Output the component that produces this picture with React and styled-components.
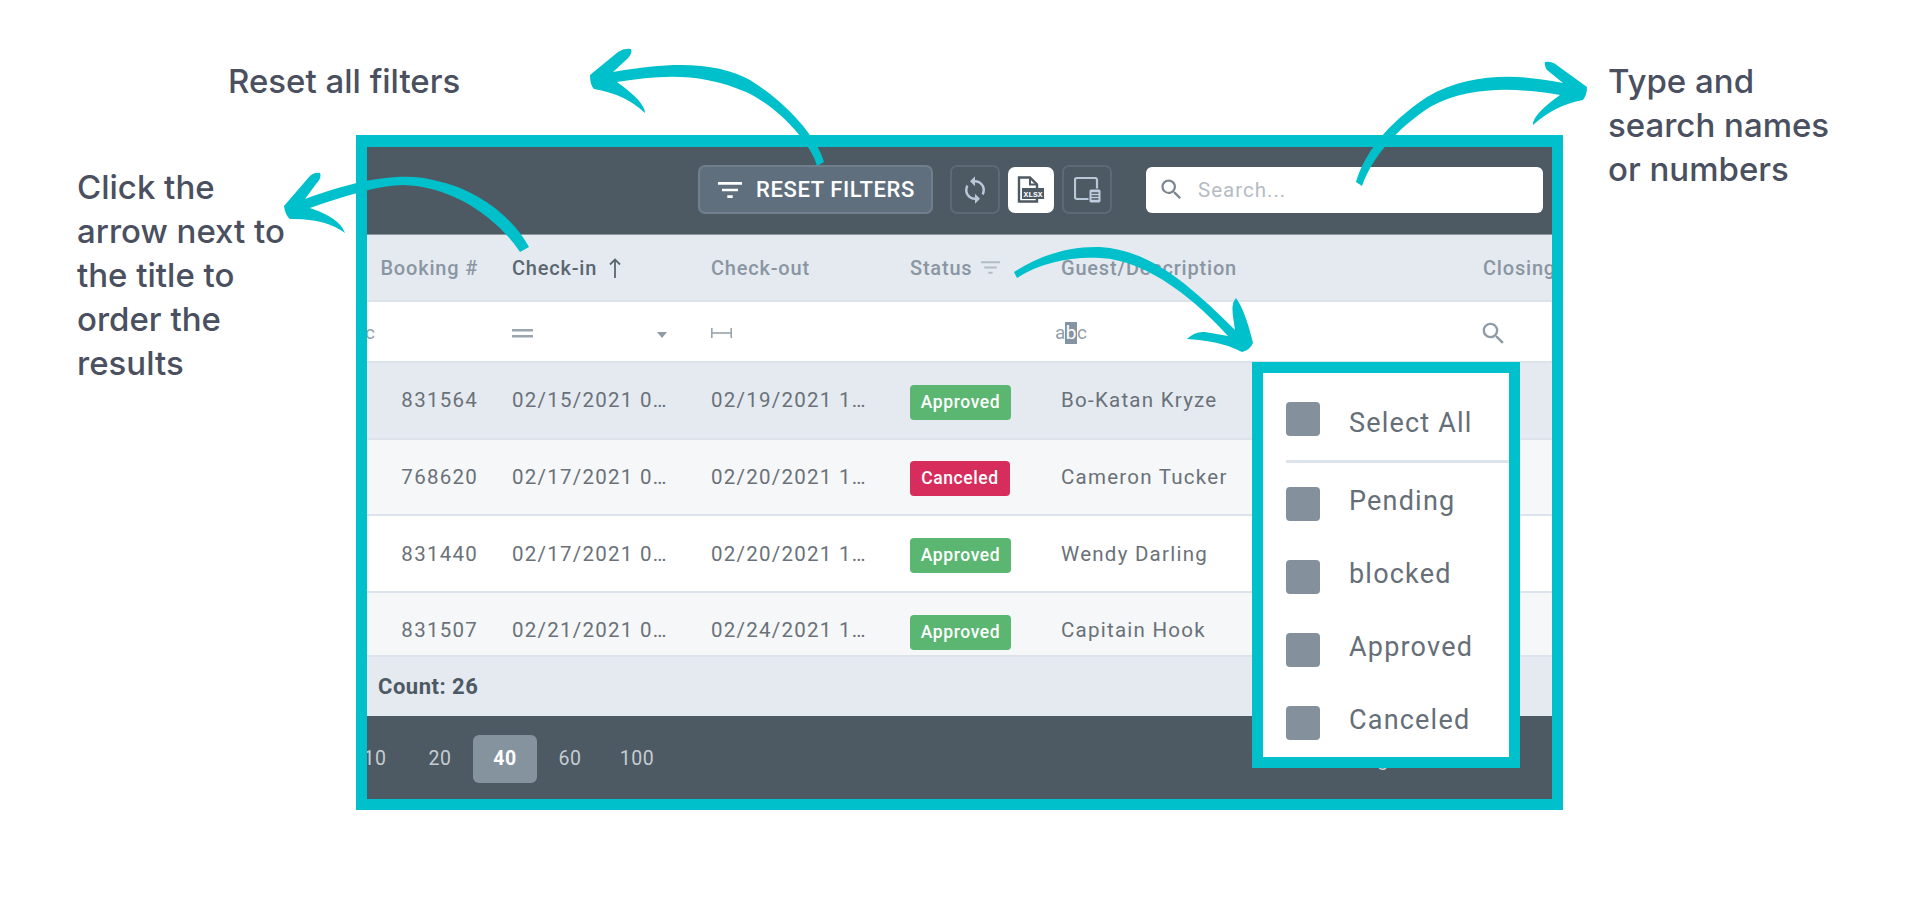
import React from "react";
import styled, { createGlobalStyle } from "styled-components";
import { MdFilterList, MdSearch, MdSync } from "react-icons/md";

const CYAN = "#00c1cb";
const COLUMNS = "162px 199px 199px 151px 422px 300px";

const bookings = [
  { id: "831564", checkIn: "02/15/2021 0…", checkOut: "02/19/2021 1…", status: "Approved", guest: "Bo-Katan Kryze", bg: "#e5eaf1" },
  { id: "768620", checkIn: "02/17/2021 0…", checkOut: "02/20/2021 1…", status: "Canceled", guest: "Cameron Tucker", bg: "#f5f7f9" },
  { id: "831440", checkIn: "02/17/2021 0…", checkOut: "02/20/2021 1…", status: "Approved", guest: "Wendy Darling", bg: "#ffffff" },
  { id: "831507", checkIn: "02/21/2021 0…", checkOut: "02/24/2021 1…", status: "Approved", guest: "Capitain Hook", bg: "#f5f7f9" },
];

const statusOptions = ["Pending", "blocked", "Approved", "Canceled"];
const pageSizes = [10, 20, 40, 60, 100];

const GlobalStyle = createGlobalStyle`
  html, body {
    margin: 0;
    padding: 0;
    background: #fff;
  }
  body {
    font-family: Roboto, "Liberation Sans", sans-serif;
  }
`;

const Page = styled.div`
  position: relative;
  width: 1920px;
  height: 900px;
  padding: 135px 0 0 356px;
  box-sizing: border-box;
  overflow: hidden;
  background: #fff;
`;

const Callout = styled.div`
  position: absolute;
  left: ${({ $x }) => $x}px;
  top: ${({ $y }) => $y}px;
  font-family: Inter, "Open Sans", sans-serif;
  font-size: 33px;
  font-weight: 500;
  line-height: 44px;
  color: #4a5060;
  white-space: nowrap;
`;

const Frame = styled.div`
  position: relative;
  width: 1185px;
  height: 652px;
  border: solid ${CYAN};
  border-width: 12px 11px 11px;
  background: #fff;
`;

const Clip = styled.div`
  height: 100%;
  overflow: hidden;
`;

const Toolbar = styled.div`
  display: flex;
  align-items: center;
  justify-content: flex-end;
  height: 88px;
  padding: 0 9px 2px 0;
  box-sizing: border-box;
  background: #4d5963;
  border-bottom: 1px solid #8b96a1;
`;

const ResetButton = styled.button`
  display: flex;
  align-items: center;
  justify-content: center;
  gap: 10px;
  width: 235px;
  height: 49px;
  margin-right: 17px;
  padding: 0 2px 0 0;
  border: 2px solid #6f7f8e;
  border-radius: 7px;
  background: #5f6f7e;
  color: #fff;
  font: 500 22px Roboto, sans-serif;
  letter-spacing: 0.6px;
`;

const IconButton = styled.button`
  display: flex;
  align-items: center;
  justify-content: center;
  box-sizing: border-box;
  width: ${({ $active }) => ($active ? 46 : 50)}px;
  height: ${({ $active }) => ($active ? 46 : 49)}px;
  margin-right: ${({ $gap }) => $gap}px;
  padding: 0;
  border: ${({ $active }) => ($active ? "0" : "2px solid #5d6a76")};
  border-radius: 7px;
  background: ${({ $active }) => ($active ? "#fff" : "transparent")};
  color: #b9c8d8;
`;

const SearchBox = styled.div`
  display: flex;
  align-items: center;
  gap: 13px;
  width: 397px;
  height: 46px;
  padding-left: 12px;
  box-sizing: border-box;
  border-radius: 6px;
  background: #fff;
  color: #7a8691;
`;

const Placeholder = styled.span`
  font-size: 20.5px;
  letter-spacing: 1px;
  color: #b5bcc3;
`;

const Table = styled.div`
  margin-left: -34px;
  width: 1333px;
`;

const GridRow = styled.div`
  display: grid;
  grid-template-columns: ${COLUMNS};
  align-items: center;
  box-sizing: border-box;
`;

const HeaderRow = styled(GridRow)`
  height: 67px;
  background: #e5eaf1;
  border-bottom: 2px solid #dde3ea;
`;

const HeaderCell = styled.div`
  display: flex;
  align-items: center;
  gap: ${({ $gap }) => $gap || 0}px;
  padding: 0 17px;
  justify-content: ${({ $right }) => ($right ? "flex-end" : "flex-start")};
  font-size: 20px;
  font-weight: 500;
  letter-spacing: 0.8px;
  white-space: nowrap;
  color: ${({ $active }) => ($active ? "#5b6670" : "#8a96a2")};
`;

const FilterRow = styled(GridRow)`
  height: 61px;
  background: #fff;
  border-bottom: 2px solid #dde3ea;
`;

const FilterCell = styled.div`
  display: flex;
  align-items: center;
  justify-content: space-between;
  padding: 3px 27px 0 ${({ $pad }) => $pad}px;
  color: #8f9ba7;
`;

const AbcGlyph = styled.span`
  font-size: 19px;
  line-height: 22px;
  color: #94a0ab;
  & > b {
    display: inline-block;
    font-weight: 400;
    color: #fff;
    background: #8494a2;
    padding: 0 0.5px;
  }
`;

const Caret = styled.span`
  width: 0;
  height: 0;
  margin-top: 4px;
  border: 5.5px solid transparent;
  border-top: 6px solid #8f9ba7;
  border-bottom: 0;
`;

const Body = styled.div`
  height: 294px;
  overflow: hidden;
  border-bottom: 2px solid #dde3ea;
  box-sizing: border-box;
`;

const BodyRow = styled(GridRow)`
  height: 76.67px;
  background: ${({ $bg }) => $bg};
  border-bottom: 2px solid #dde3ea;
`;

const Cell = styled.div`
  padding: 0 17px;
  font-size: 20.5px;
  letter-spacing: 1.25px;
  color: #6a7178;
  white-space: nowrap;
  text-align: ${({ $right }) => ($right ? "right" : "left")};
`;

const Badge = styled.span`
  display: block;
  width: ${({ $status }) => ($status === "Canceled" ? 100 : 101)}px;
  height: 35px;
  margin: 4px 0 0 17px;
  border-radius: 4px;
  background: ${({ $status }) => ($status === "Canceled" ? "#d62d5c" : "#5ab671")};
  color: #fff;
  font-size: 17.5px;
  font-weight: 500;
  line-height: 35px;
  letter-spacing: 0.6px;
  text-align: center;
`;

const CountBar = styled.div`
  display: flex;
  align-items: center;
  height: 59px;
  padding-left: 11px;
  background: #e5eaf1;
  color: #4d5963;
  font-size: 22px;
  font-weight: 700;
  letter-spacing: 0.5px;
`;

const Pager = styled.div`
  display: flex;
  align-items: center;
  gap: 1px;
  height: 83px;
  margin-left: -24px;
  padding: 2px 153px 0 0;
  box-sizing: border-box;
  background: #4d5963;
`;

const PageSize = styled.span`
  width: ${({ $wide }) => ($wide ? 68 : 64)}px;
  height: 48px;
  border-radius: 6px;
  background: ${({ $current }) => ($current ? "#85939f" : "transparent")};
  color: ${({ $current }) => ($current ? "#fff" : "#c5cdd3")};
  font-size: 19.5px;
  font-weight: ${({ $current }) => ($current ? 700 : 400)};
  line-height: 48px;
  letter-spacing: 0.6px;
  text-align: center;
`;

const PageInfo = styled.span`
  margin-left: auto;
  font-size: 20px;
  color: #c5cdd3;
`;

const StatusMenu = styled.div`
  position: absolute;
  left: 885px;
  top: 215px;
  width: 223px;
  height: 355px;
  padding: 29px 0 0 23px;
  border: 11px solid ${CYAN};
  background: #fff;
`;

const MenuRow = styled.div`
  display: flex;
  align-items: center;
  gap: 29px;
  height: 34px;
  margin-bottom: ${({ $gap }) => $gap}px;
`;

const CheckBox = styled.span`
  width: 34px;
  height: 34px;
  border-radius: 4px;
  background: #84919d;
`;

const MenuLabel = styled.span`
  padding: ${({ $first }) => ($first ? "7px 0 0" : "0 0 6px")};
  font-size: 27px;
  letter-spacing: 1.2px;
  color: #666e78;
`;

const MenuDivider = styled.div`
  height: 3px;
  margin-bottom: 24px;
  background: #dde3ea;
`;

const Arrows = styled.svg`
  position: absolute;
  inset: 0;
  pointer-events: none;
`;

const SortArrow = () => (
  <svg width="12" height="20" viewBox="0 0 12 20" fill="none" stroke="#5b6670" strokeWidth="1.8">
    <path d="M6 20V1.5M1 6.5 6 1.5l5 5" />
  </svg>
);

const EqualsIcon = () => (
  <svg width="21" height="9" viewBox="0 0 21 9" fill="#9aa5b0">
    <rect width="21" height="2.5" />
    <rect y="6" width="21" height="2.5" />
  </svg>
);

const BetweenIcon = () => (
  <svg width="21" height="10" viewBox="0 0 21 10" fill="#9aa5b0">
    <rect width="1.6" height="10" />
    <rect x="19.4" width="1.6" height="10" />
    <rect y="4.2" width="21" height="1.6" />
  </svg>
);

const XlsxIcon = () => (
  <svg width="28" height="27" viewBox="0 0 28 27">
    <path d="M2 1.5h11l7 7v17H2z" fill="none" stroke="#4d5963" strokeWidth="2.4" />
    <path d="M13 1.5v7h7" fill="none" stroke="#4d5963" strokeWidth="2" />
    <rect x="5" y="12" width="22" height="11" fill="#4d5963" />
    <text x="16" y="20.5" textAnchor="middle" fontSize="8" fontWeight="700" fill="#fff" fontFamily="Liberation Mono, monospace">XLSX</text>
  </svg>
);

const ColumnChooserIcon = () => (
  <svg width="27" height="26" viewBox="0 0 27 26">
    <rect x="1" y="1" width="22" height="21" rx="2" fill="none" stroke="#b9c8d8" strokeWidth="2.2" />
    <rect x="15" y="12" width="12" height="14" rx="2" fill="#c3cbe0" stroke="#4d5963" strokeWidth="1" />
    <path d="M17.5 16h7M17.5 19h7M17.5 22h7" stroke="#4d5963" strokeWidth="1.4" />
  </svg>
);

export default function App() {
  return (
    <>
      <GlobalStyle />
      <Page>
        <Callout $x={228} $y={59}>Reset all filters</Callout>
        <Callout $x={77} $y={165}>
          Click the<br />arrow next to<br />the title to<br />order the<br />results
        </Callout>
        <Callout $x={1608} $y={59}>
          Type and<br />search names<br />or numbers
        </Callout>

        <Frame>
          <Clip>
            <Toolbar>
              <ResetButton>
                <MdFilterList size={32} />
                RESET FILTERS
              </ResetButton>
              <IconButton $gap={8}><MdSync size={30} /></IconButton>
              <IconButton $active $gap={8}><XlsxIcon /></IconButton>
              <IconButton $gap={34}><ColumnChooserIcon /></IconButton>
              <SearchBox>
                <MdSearch size={27} />
                <Placeholder>Search...</Placeholder>
              </SearchBox>
            </Toolbar>

            <Table>
              <HeaderRow>
                <HeaderCell $right>Booking #</HeaderCell>
                <HeaderCell $active $gap={12}>Check-in <SortArrow /></HeaderCell>
                <HeaderCell>Check-out</HeaderCell>
                <HeaderCell $gap={6}>Status <MdFilterList size={25} color="#b2bcc6" /></HeaderCell>
                <HeaderCell>Guest/Description</HeaderCell>
                <HeaderCell>Closing</HeaderCell>
              </HeaderRow>

              <FilterRow>
                <FilterCell $pad={10}><AbcGlyph>a<b>b</b>c</AbcGlyph></FilterCell>
                <FilterCell $pad={17}><EqualsIcon /><Caret /></FilterCell>
                <FilterCell $pad={17}><BetweenIcon /></FilterCell>
                <FilterCell $pad={17} />
                <FilterCell $pad={11}><AbcGlyph>a<b>b</b>c</AbcGlyph></FilterCell>
                <FilterCell $pad={13}><MdSearch size={29} /></FilterCell>
              </FilterRow>

              <Body>
                {bookings.map((b) => (
                  <BodyRow key={b.id} $bg={b.bg}>
                    <Cell $right>{b.id}</Cell>
                    <Cell>{b.checkIn}</Cell>
                    <Cell>{b.checkOut}</Cell>
                    <Badge $status={b.status}>{b.status}</Badge>
                    <Cell>{b.guest}</Cell>
                    <Cell />
                  </BodyRow>
                ))}
              </Body>
            </Table>

            <CountBar>Count: 26</CountBar>

            <Pager>
              {pageSizes.map((size) => (
                <PageSize key={size} $current={size === 40} $wide={size === 100}>{size}</PageSize>
              ))}
              <PageInfo>Page</PageInfo>
            </Pager>
          </Clip>

          <StatusMenu>
            <MenuRow $gap={24}>
              <CheckBox />
              <MenuLabel $first>Select All</MenuLabel>
            </MenuRow>
            <MenuDivider />
            {statusOptions.map((option) => (
              <MenuRow key={option} $gap={39}>
                <CheckBox />
                <MenuLabel>{option}</MenuLabel>
              </MenuRow>
            ))}
          </StatusMenu>
        </Frame>

        <Arrows width="1920" height="900" viewBox="0 0 1920 900" fill={CYAN}>
          <path d="M824 162C818 140 790 105 750 80C720 64 680 60 613 72L626 60Q633 54 631 49Q624 48 618 52L590 75Q590 85 594 89Q625 94 645 113Q645 102 617 82C660 75 700 72 746 92C780 108 812 145 817 166Z" />
          <path d="M529 247C515 220 480 190 437 181C410 173 370 175 305 199L316 184Q322 178 320 173Q314 172 309 177L284 206Q285 215 290 219Q325 218 345 233Q340 218 310 208C345 196 375 186 403 185C450 186 495 215 520 252Z" />
          <path d="M1356 182C1364 155 1385 125 1427 97C1470 72 1520 74 1563 83L1547 70Q1544 65 1545 62Q1552 61 1558 66L1587 87Q1587 95 1583 100Q1555 105 1533 125Q1532 115 1560 95C1520 88 1470 85 1430 107C1395 130 1372 158 1362 186Z" />
          <path d="M1014 272C1040 255 1070 246 1100 247C1150 250 1190 285 1235 330C1233 315 1230 305 1236 298Q1245 310 1253 343Q1250 350 1242 352C1225 343 1205 340 1187 339Q1195 331 1205 332L1228 336C1200 305 1150 260 1100 258C1075 256 1040 262 1017 278Z" />
        </Arrows>
      </Page>
    </>
  );
}
